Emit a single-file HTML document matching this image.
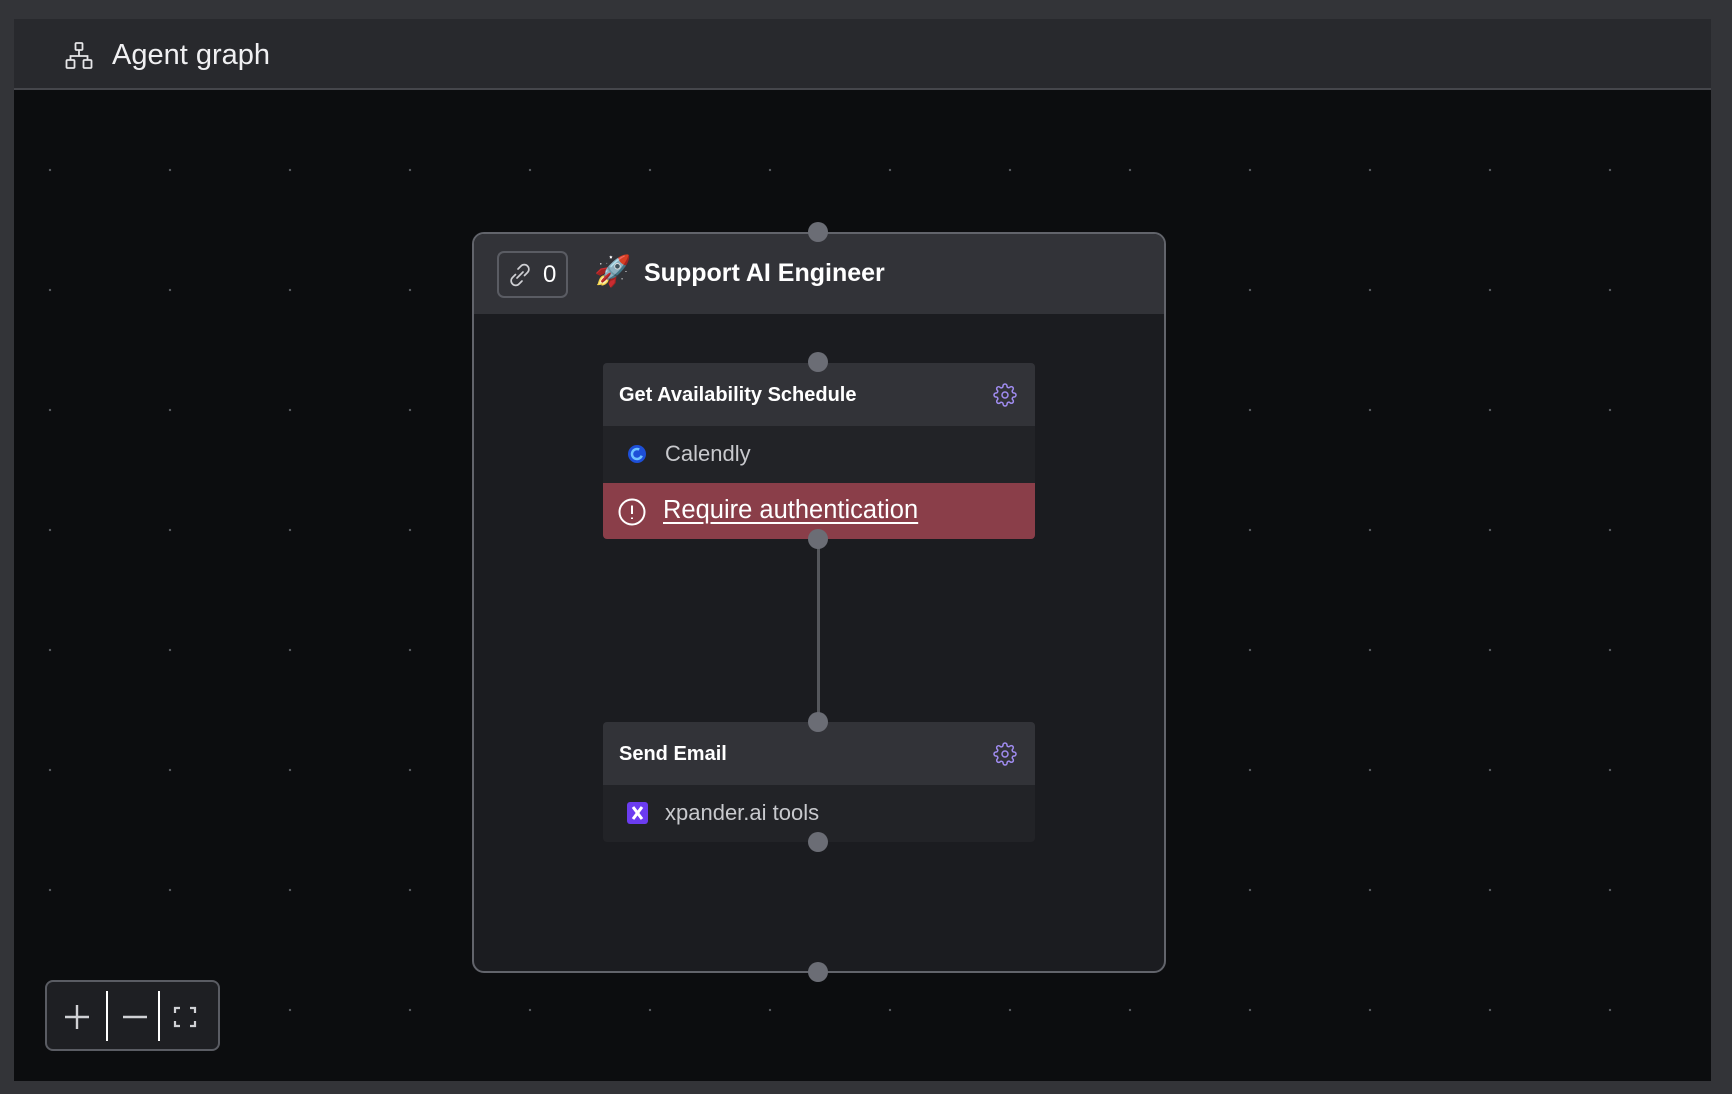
<!DOCTYPE html>
<html><head><meta charset="utf-8"><style>
*{margin:0;padding:0;box-sizing:border-box}
body{width:1732px;height:1094px;background:#333438;font-family:"Liberation Sans",sans-serif;position:relative;overflow:hidden}
.panel{position:absolute;left:14px;top:19px;width:1697px;height:1062px;background:#0c0d0f;overflow:hidden}
.hdr{position:absolute;left:0;top:0;width:100%;height:71px;background:#28292d;border-bottom:2px solid #45464b}
.hdr .t{position:absolute;left:98px;top:20px;color:#f0f0f2;font-size:29px}
.canvas{position:absolute;left:0;top:71px;width:100%;height:991px;
background-image:radial-gradient(circle,#55575c 1.2px,transparent 1.3px);background-size:120px 120px;background-position:-24px 20px}
.abs{position:absolute}
.handle{position:absolute;width:20px;height:20px;border-radius:50%;background:#6b6d75;margin-left:-10px;margin-top:-10px}
.group{left:472px;top:232px;width:694px;height:741px;border:2px solid #62646b;border-radius:12px;background:#1b1c20;overflow:hidden}
.ghdr{position:absolute;left:0;top:0;width:100%;height:80px;background:#323338}
.badge{position:absolute;left:23px;top:17px;width:71px;height:47px;border:2px solid #5a5c63;border-radius:7px;color:#fff;font-size:24px}
.gt{position:absolute;left:170px;top:25px;color:#fff;font-size:25px;font-weight:bold}
.tool{position:absolute;left:603px;width:432px;border-radius:4px;overflow:hidden;background:#222327}
.th{height:63px;background:#323338;color:#fff;font-weight:bold;font-size:20px;padding:21px 0 0 16px;position:relative}
.tr{height:57px;color:#c8c9cd;font-size:22px;padding:15px 0 0 62px;position:relative}
.red{height:56px;background:#8a3e49;color:#fff;font-size:25.5px;padding:13px 0 0 60px;position:relative}
.gear{position:absolute;right:18px;top:20px}
</style></head><body>
<div class="panel">
 <div class="hdr">
  <svg class="abs" style="left:51px;top:23px" width="28" height="27" viewBox="0 0 28 27" fill="none" stroke="#e6e6e8" stroke-width="1.8"><rect x="10.5" y="1" width="7" height="7" rx="1"/><path d="M14 8v6M5.5 18v-4h17v4"/><rect x="1.5" y="18" width="8" height="8" rx="1"/><rect x="18.5" y="18" width="8" height="8" rx="1"/></svg>
  <div class="t">Agent graph</div>
 </div>
 <div class="canvas"></div>
</div>
<div class="abs group">
 <div class="ghdr">
  <div class="badge">
   <svg class="abs" style="left:8px;top:9px" width="26" height="26" viewBox="0 0 26 26" fill="none" stroke="#cfd0d4" stroke-width="1.7" stroke-linecap="round"><path d="M11 7l3-3a4.5 4.5 0 016.5 6.5l-3 3M15 19l-3 3a4.5 4.5 0 01-6.5-6.5l3-3M10 16l6-6"/></svg>
   <span class="abs" style="left:44px;top:8px">0</span>
  </div>
  <div class="abs" style="left:120px;top:20px;font-size:30px;font-family:'Noto Color Emoji',sans-serif">🚀</div>
  <div class="gt">Support AI Engineer</div>
 </div>
</div>
<div class="tool" style="top:363px">
 <div class="th">Get Availability Schedule
  <svg class="gear" width="24" height="24" viewBox="0 0 24 24" fill="none" stroke="#a08cf0" stroke-width="1.5"><circle cx="12" cy="12" r="3"/><path d="M19.4 15a1.65 1.65 0 00.33 1.820l.06.06a2 2 0 11-2.83 2.83l-.06-.06a1.65 1.65 0 00-1.82-.33 1.65 1.65 0 00-1 1.51V21a2 2 0 11-4 0v-.09A1.65 1.65 0 009 19.4a1.65 1.65 0 00-1.82.33l-.06.06a2 2 0 11-2.83-2.83l.06-.06A1.65 1.65 0 004.68 15a1.65 1.65 0 00-1.51-1H3a2 2 0 110-4h.09A1.65 1.65 0 004.6 9a1.65 1.65 0 00-.33-1.82l-.06-.06a2 2 0 112.83-2.83l.06.06A1.65 1.65 0 009 4.68a1.65 1.65 0 001-1.51V3a2 2 0 114 0v.09a1.65 1.65 0 001 1.51 1.65 1.65 0 001.82-.33l.06-.06a2 2 0 112.83 2.83l-.06.06A1.65 1.65 0 0019.4 9a1.65 1.65 0 001.51 1H21a2 2 0 110 4h-.09a1.65 1.65 0 00-1.51 1z"/></svg>
 </div>
 <div class="tr">
  <svg class="abs" style="left:24px;top:18px" width="20" height="20" viewBox="0 0 20 20"><circle cx="10" cy="10" r="9" fill="#1d4fd8"/><circle cx="10" cy="10" r="5" fill="none" stroke="#6ec1ff" stroke-width="2.5" stroke-dasharray="24 8" transform="rotate(20 10 10)"/></svg>
  Calendly</div>
 <div class="red">
  <svg class="abs" style="left:15px;top:15px" width="28" height="28" viewBox="0 0 28 28" fill="none" stroke="#fff" stroke-width="2"><circle cx="14" cy="14" r="12.5"/><path d="M14 7.5v8.5M14 19.5v1.5"/></svg>
  <span style="text-decoration:underline;text-underline-offset:4px">Require authentication</span></div>
</div>
<div class="abs" style="left:817px;top:539px;width:3px;height:183px;background:#55575c"></div>
<div class="tool" style="top:722px">
 <div class="th">Send Email
  <svg class="gear" width="24" height="24" viewBox="0 0 24 24" fill="none" stroke="#a08cf0" stroke-width="1.5"><circle cx="12" cy="12" r="3"/><path d="M19.4 15a1.65 1.65 0 00.33 1.82l.06.06a2 2 0 11-2.83 2.83l-.06-.06a1.65 1.65 0 00-1.82-.33 1.65 1.65 0 00-1 1.51V21a2 2 0 11-4 0v-.09A1.65 1.65 0 009 19.4a1.65 1.65 0 00-1.82.33l-.06.06a2 2 0 11-2.83-2.83l.06-.06A1.65 1.65 0 004.68 15a1.65 1.65 0 00-1.51-1H3a2 2 0 110-4h.09A1.65 1.65 0 004.6 9a1.65 1.65 0 00-.33-1.82l-.06-.06a2 2 0 112.83-2.83l.06.06A1.65 1.65 0 009 4.68a1.65 1.65 0 001-1.51V3a2 2 0 114 0v.09a1.65 1.65 0 001 1.51 1.65 1.65 0 001.82-.33l.06-.06a2 2 0 112.83 2.83l-.06.06A1.65 1.65 0 0019.4 9a1.65 1.65 0 001.51 1H21a2 2 0 110 4h-.09a1.65 1.65 0 00-1.51 1z"/></svg>
 </div>
 <div class="tr">
  <svg class="abs" style="left:24px;top:17px" width="21" height="22" viewBox="0 0 21 22"><rect width="21" height="22" rx="3" fill="#6b3cf0"/><path d="M6 5l9 12M15 5l-9 12" stroke="#fff" stroke-width="3"/></svg>
  xpander.ai tools</div>
</div>
<div class="handle" style="left:818px;top:232px"></div>
<div class="handle" style="left:818px;top:362px"></div>
<div class="handle" style="left:818px;top:539px"></div>
<div class="handle" style="left:818px;top:722px"></div>
<div class="handle" style="left:818px;top:842px"></div>
<div class="handle" style="left:818px;top:972px"></div>
<div class="abs" style="left:45px;top:980px;width:175px;height:71px;border:2px solid #5a5c63;border-radius:8px;background:#1e1f23">
 <svg class="abs" style="left:17px;top:22px" width="26" height="26" viewBox="0 0 26 26" stroke="#d0d1d5" stroke-width="2.4"><path d="M13 1v24M1 13h24"/></svg>
 <div class="abs" style="left:59px;top:9px;width:2px;height:50px;background:#fff"></div>
 <svg class="abs" style="left:75px;top:22px" width="26" height="26" viewBox="0 0 26 26" stroke="#d0d1d5" stroke-width="2.4"><path d="M1 13h24"/></svg>
 <div class="abs" style="left:111px;top:9px;width:2px;height:50px;background:#fff"></div>
 <svg class="abs" style="left:126px;top:23px" width="24" height="24" viewBox="0 0 24 24" fill="none" stroke="#d0d1d5" stroke-width="2.2"><path d="M2 8V3h5M17 3h5v5M22 16v5h-5M7 21H2v-5"/></svg>
</div>
</body></html>
